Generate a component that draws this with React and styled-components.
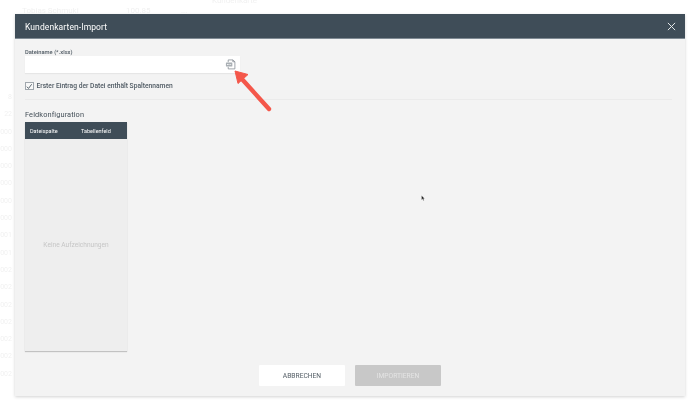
import React from "react";
import styled, { createGlobalStyle } from "styled-components";

const backdropCodes = [
  "8", "22", "000", "000", "000", "000", "000", "000", "001", "001",
  "002", "002", "002", "002", "002", "002", "002"
];

const App = () => (
  <Page>
    <GlobalStyle />
    <Backdrop>
      <BackdropHeading>Kundenkarte</BackdropHeading>
      <BackdropRow>
        <BackdropCell $width={104}>Tobias Schmuki</BackdropCell>
        <BackdropCell $width={55}>100.85</BackdropCell>
        <BackdropCell>...</BackdropCell>
      </BackdropRow>
      <BackdropList>
        {backdropCodes.map((code, i) => (
          <BackdropCode key={i}>{code}</BackdropCode>
        ))}
      </BackdropList>
    </Backdrop>

    <Modal>
      <Header>
        <Title>Kundenkarten-Import</Title>
        <CloseIcon viewBox="0 0 10 10">
          <path d="M1 1 L9 9 M9 1 L1 9" />
        </CloseIcon>
      </Header>

      <Body>
        <FieldLabel>Dateiname (*.xlsx)</FieldLabel>
        <FileInput>
          <FileIcon viewBox="0 0 12 12">
            <path d="M3.5 3.5 V1 H8.5 L10.8 3 V10.8 H3.5 V8.5" />
            <path d="M8.5 1 V3 H10.8" />
            <rect x="1" y="3.8" width="7" height="4.4" rx="0.6" fill="#a9afb4" stroke="none" />
            <path d="M2.2 6 H6.8" stroke="#ffffff" strokeWidth="1" strokeDasharray="1 0.5" />
          </FileIcon>
        </FileInput>

        <CheckRow>
          <CheckBox>
            <svg viewBox="0 0 8 8" width="7" height="7">
              <path d="M1 4.2 L3.1 6.4 L7 1.2" fill="none" stroke="#4a5660" strokeWidth="1.1" />
            </svg>
          </CheckBox>
          <CheckText>Erster Eintrag der Datei enthält Spaltennamen</CheckText>
        </CheckRow>

        <Divider />

        <SectionTitle>Feldkonfiguration</SectionTitle>
        <Table>
          <TableHead>
            <HeadCell $width={51}>Dateispalte</HeadCell>
            <HeadCell>Tabellenfeld</HeadCell>
          </TableHead>
          <EmptyBody>Keine Aufzeichnungen</EmptyBody>
        </Table>
      </Body>

      <Footer>
        <FooterButton>ABBRECHEN</FooterButton>
        <FooterButton $disabled>IMPORTIEREN</FooterButton>
      </Footer>
    </Modal>

    <CursorMark viewBox="0 0 5 8">
      <path d="M0.5 0.5 V6.5 L2 5.2 L3.2 7.5 L4 7 L3 5 L4.6 4.6 Z" fill="#222" stroke="#fff" strokeWidth="0.4" />
    </CursorMark>

    <Arrow viewBox="0 0 44 46">
      <path d="M37 41 L9 10" stroke="#f4574a" strokeWidth="4.4" strokeLinecap="round" fill="none" />
      <path d="M3 3 L16 6.5 L6 15.5 Z" fill="#f4574a" stroke="#f4574a" strokeWidth="1" strokeLinejoin="round" />
    </Arrow>
  </Page>
);

export default App;

const GlobalStyle = createGlobalStyle`
  html, body {
    margin: 0;
    padding: 0;
    background: #ffffff;
  }
  body {
    font-family: Roboto, "Liberation Sans", sans-serif;
  }
`;

const Page = styled.div`
  position: relative;
  width: 688px;
  height: 400px;
  overflow: hidden;
  background: #ffffff;
  filter: blur(0.4px);
`;

const Backdrop = styled.div`
  display: flex;
  flex-direction: column;
  height: 100%;
  color: #f1f1f1;
  font-size: 8px;
`;

const BackdropHeading = styled.div`
  height: 5px;
  line-height: 2px;
  padding-left: 212px;
`;

const BackdropRow = styled.div`
  display: flex;
  height: 12px;
  line-height: 12px;
  padding-left: 22px;
`;

const BackdropCell = styled.span`
  width: ${props => (props.$width ? `${props.$width}px` : "auto")};
  white-space: nowrap;
`;

const BackdropList = styled.div`
  display: flex;
  flex-direction: column;
  align-items: flex-end;
  width: 12px;
  margin-top: 72px;
`;

const BackdropCode = styled.span`
  height: 17.3px;
  line-height: 17.3px;
  font-size: 7px;
`;

const Modal = styled.section`
  position: absolute;
  left: 15px;
  top: 14px;
  width: 670px;
  height: 382px;
  display: flex;
  flex-direction: column;
  background: #f3f3f3;
  box-shadow: 0 1px 3px rgba(0, 0, 0, 0.18);
`;

const Header = styled.header`
  flex: none;
  height: 25px;
  box-sizing: border-box;
  display: flex;
  align-items: center;
  justify-content: space-between;
  padding: 1px 9px 0 10px;
  background: #3f4d58;
  border-bottom: 1px solid #7f8a93;
  color: #ffffff;
`;

const Title = styled.h1`
  margin: 0;
  font-size: 8.5px;
  font-weight: 400;
  letter-spacing: 0.1px;
`;

const CloseIcon = styled.svg`
  width: 9px;
  height: 9px;
  fill: none;
  stroke: #e6e9eb;
  stroke-width: 1.1;
`;

const Body = styled.div`
  flex: 1;
  display: flex;
  flex-direction: column;
  padding: 9px 13px 0 10px;
  min-height: 0;
`;

const FieldLabel = styled.label`
  font-size: 5.75px;
  font-weight: 500;
  line-height: 8px;
  color: #4f5a63;
`;

const FileInput = styled.div`
  width: 215px;
  height: 17px;
  display: flex;
  align-items: center;
  justify-content: flex-end;
  padding-right: 4px;
  box-sizing: border-box;
  background: #ffffff;
  box-shadow: 0 1px 1px rgba(0, 0, 0, 0.05);
`;

const FileIcon = styled.svg`
  width: 11px;
  height: 11px;
  fill: none;
  stroke: #7f878e;
  stroke-width: 0.8;
`;

const CheckRow = styled.div`
  display: flex;
  align-items: center;
  gap: 3px;
  margin-top: 8px;
`;

const CheckBox = styled.span`
  width: 8.5px;
  height: 8.5px;
  box-sizing: border-box;
  display: flex;
  align-items: center;
  justify-content: center;
  background: #f8f8f8;
  border: 1px solid #a0a7ad;
`;

const CheckText = styled.span`
  font-size: 6.7px;
  font-weight: 500;
  color: #4f5a63;
  line-height: 10px;
`;

const Divider = styled.hr`
  width: 100%;
  height: 1px;
  margin: 8px 0 0;
  border: 0;
  background: #ebebeb;
`;

const SectionTitle = styled.h2`
  margin: 9px 0 0;
  font-size: 7.4px;
  font-weight: 400;
  line-height: 12px;
  color: #444f58;
  letter-spacing: 0.1px;
`;

const Table = styled.div`
  width: 102px;
  height: 229px;
  margin-top: 1px;
  display: flex;
  flex-direction: column;
  background: #eeeeee;
  box-shadow: 0 1px 1px rgba(0, 0, 0, 0.2);
`;

const TableHead = styled.div`
  flex: none;
  height: 17px;
  display: flex;
  align-items: center;
  background: #3f4d58;
  color: #ffffff;
  font-size: 5.5px;
`;

const HeadCell = styled.span`
  width: ${props => (props.$width ? `${props.$width}px` : "auto")};
  padding-left: 5px;
  box-sizing: border-box;
`;

const EmptyBody = styled.div`
  flex: 1;
  display: flex;
  align-items: center;
  justify-content: center;
  font-size: 6.6px;
  color: #c6c6c6;
`;

const Footer = styled.footer`
  flex: none;
  display: flex;
  justify-content: center;
  gap: 10px;
  padding-bottom: 10px;
`;

const FooterButton = styled.button`
  width: 86px;
  height: 21px;
  padding: 0;
  border: 0;
  border-radius: 1px;
  font-family: inherit;
  font-size: 6.7px;
  background: ${props => (props.$disabled ? "#c8c8c8" : "#ffffff")};
  color: ${props => (props.$disabled ? "#e4e4e4" : "#545e66")};
`;

const Arrow = styled.svg`
  position: absolute;
  left: 232px;
  top: 68px;
  width: 44px;
  height: 46px;
`;

const CursorMark = styled.svg`
  position: absolute;
  left: 421px;
  top: 195px;
  width: 4px;
  height: 6px;
`;
